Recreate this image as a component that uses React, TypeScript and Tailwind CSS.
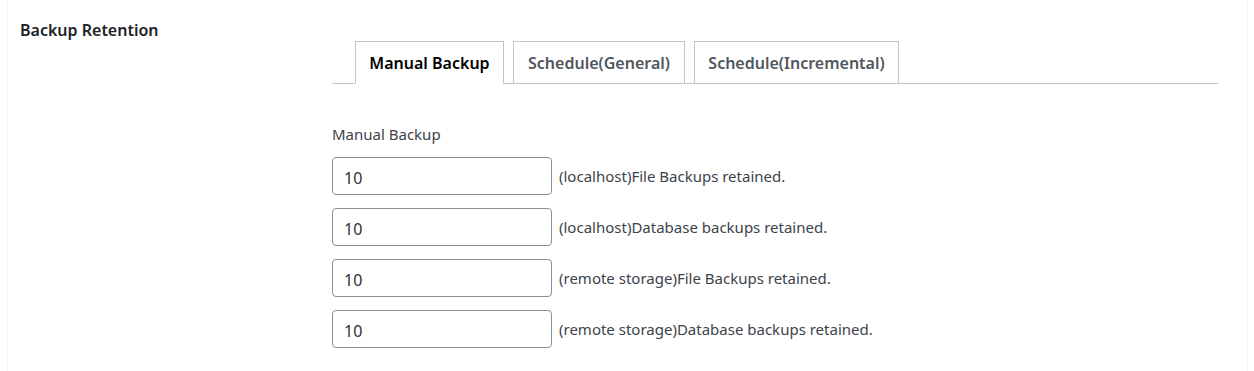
import React, { useState } from 'react';

const TABS = ['Manual Backup', 'Schedule(General)', 'Schedule(Incremental)'];
const TAB_WIDTHS = ['w-[149px]', 'w-[172px]', 'w-[205px]'];

const ROWS = [
  '(localhost)File Backups retained.',
  '(localhost)Database backups retained.',
  '(remote storage)File Backups retained.',
  '(remote storage)Database backups retained.',
];

const App: React.FC = () => {
  const [active, setActive] = useState(0);

  return (
    <div className="w-[1254px] h-[371px] bg-white font-['Noto_Sans',sans-serif] text-[#3c434a]">
      <div className="ml-[7px] mr-[6px] h-full border-x border-[#f3f3f4] flex">
        {/* ROW LABEL */}
        <div className="w-[324px] shrink-0 pl-[12px] pt-[18px]">
          <h3 className="text-[16px] leading-[24px] font-semibold text-[#1d2327]">Backup Retention</h3>
        </div>

        {/* SETTINGS */}
        <div className="flex-1 pt-[41px] pr-[29px]">
          <div className="flex gap-[9px] pl-[23px] border-b border-[#c3c4c7]">
            {TABS.map((tab, i) => (
              <button
                key={tab}
                onClick={() => setActive(i)}
                className={`${TAB_WIDTHS[i]} h-[43px] -mb-px border border-[#c3c4c7] flex items-center justify-center text-[16px] font-semibold ${
                  i === active ? 'bg-white border-b-white text-black' : 'bg-white text-[#50575e]'
                }`}
              >
                {tab}
              </button>
            ))}
          </div>

          <div className="pt-[40px]">
            <div className="text-[15px] leading-[20px] mb-[13px]">Manual Backup</div>
            <div className="flex flex-col gap-[13px]">
              {ROWS.map((label) => (
                <div key={label} className="flex items-center gap-[7px]">
                  <input
                    type="text"
                    defaultValue="10"
                    className="w-[220px] h-[38px] px-[11px] pt-[3px] border border-[#8c8f94] rounded-[4px] text-[16px] text-[#2c3338] bg-white outline-none"
                  />
                  <span className="text-[15px] leading-[20px]">{label}</span>
                </div>
              ))}
            </div>
          </div>
        </div>
      </div>
    </div>
  );
};

export default App;
